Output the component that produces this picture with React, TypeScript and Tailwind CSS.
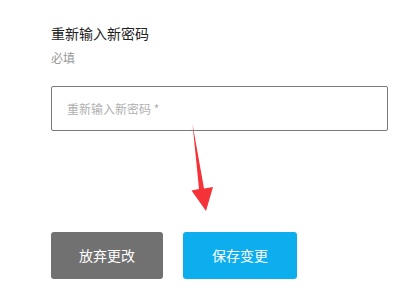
import React from "react";

export default function App() {
  return (
    <div
      className="relative w-[416px] h-[291px] bg-white overflow-hidden"
      style={{ fontFamily: '"Noto Sans CJK SC", "Noto Sans", sans-serif' }}
    >
      <div className="pl-[51px] pr-[28px] pt-[23px]">
        <div className="text-[14px] leading-[20px] text-[#222]">重新输入新密码</div>
        <div className="mt-[7px] text-[12px] leading-[16px] text-[#999]">必填</div>
        <div className="mt-[20px] h-[45px] w-[337px] border border-[#7a7a7a] rounded-[2px] flex items-center pl-[15px]">
          <span className="text-[12px] text-[#b0b0b0]">重新输入新密码 *</span>
        </div>
        <div className="mt-[101px] flex gap-[20px]">
          <button className="w-[112px] h-[47px] rounded-[3px] bg-[#717171] text-white text-[14px]">
            放弃更改
          </button>
          <button className="w-[114px] h-[47px] rounded-[3px] bg-[#0caeee] text-white text-[14px]">
            保存变更
          </button>
        </div>
      </div>
      <svg className="absolute left-0 top-0" width="416" height="291" viewBox="0 0 416 291">
        <polygon
          points="192.5,124 199,189 191.5,190.5 206,211 213,187 204,188.5"
          fill="#f43237"
        />
      </svg>
    </div>
  );
}
